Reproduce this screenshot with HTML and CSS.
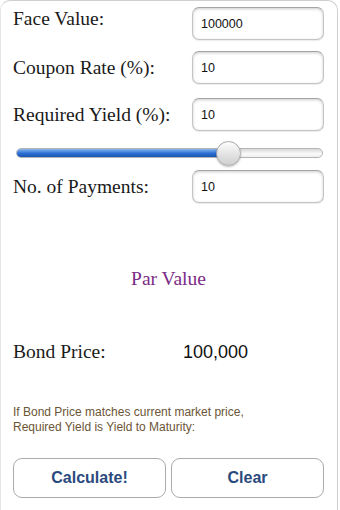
FILE: index.html
```html
<!DOCTYPE html>
<html lang="en">
<head>
  <meta charset="UTF-8">
  <meta name="viewport" content="width=device-width, initial-scale=1.0">
  <title>Bond Price</title>
  <link rel="stylesheet" href="styles.css">
</head>
<body>
  <div class="panel">
    <div class="row row-face">
      <label class="label">Face Value:</label>
      <input class="field" type="text" value="100000">
    </div>
    <div class="row row-coupon">
      <label class="label">Coupon Rate (%):</label>
      <input class="field" type="text" value="10">
    </div>
    <div class="row row-yield">
      <label class="label">Required Yield (%):</label>
      <input class="field" type="text" value="10">
    </div>

    <div class="slider">
      <div class="track">
        <div class="fill" style="width: 69%"></div>
      </div>
      <div class="thumb" style="left: 69%"></div>
    </div>

    <div class="row row-payments">
      <label class="label">No. of Payments:</label>
      <input class="field" type="text" value="10">
    </div>

    <div class="result-type">Par Value</div>

    <div class="price">
      <span class="label price-label">Bond Price:</span>
      <span class="price-value">100,000</span>
    </div>

    <p class="note">If Bond Price matches current market price,<br>Required Yield is Yield to Maturity:</p>

    <div class="btn-container">
      <button class="btn">Calculate!</button>
      <button class="btn">Clear</button>
    </div>
  </div>
</body>
</html>
```

FILE: styles.css
```css
body {
  margin: 0;
  padding: 0;
  background-color: #fff;
  font-family: "Liberation Sans", Arial, sans-serif;
}

/* main panel */
.panel {
  box-sizing: border-box;
  width: 338px;
  height: 510px;
  padding: 6px 13px 0 12px;
  background-color: #fff;
  border: 1px solid #cfcfcf;
  border-bottom: none;
  border-left-color: #e6e6e6;
  border-radius: 10px 10px 0 0;
}

/* label + input rows */
.row {
  display: flex;
  align-items: center;
  height: 33px;
}

.row-coupon {
  margin-top: 11px;
}

.row-yield {
  margin-top: 14px;
}

.row-payments {
  margin-top: 5px;
}

.row-face .label {
  margin-bottom: 9px;
}

.label {
  width: 179px;
  font-family: "Liberation Serif", "Times New Roman", serif;
  font-size: 19.5px;
  color: #1a1a1a;
}

.field {
  box-sizing: border-box;
  width: 132px;
  height: 33px;
  margin: 0;
  padding: 0 8px;
  font-family: "Liberation Sans", Arial, sans-serif;
  font-size: 12.5px;
  color: #111;
  background-color: #fff;
  border: 1px solid #c4c4c4;
  border-top-color: #a4a4a4;
  border-radius: 7px;
  box-shadow: inset 0 1px 3px rgba(0, 0, 0, 0.2), 0 1px 1px rgba(0, 0, 0, 0.08);
}

/* yield slider */
.slider {
  position: relative;
  height: 24px;
  margin: 10px 1px 0 3px;
  display: flex;
  align-items: center;
}

.track {
  box-sizing: border-box;
  width: 100%;
  height: 10px;
  border: 1px solid #b5b5b5;
  border-radius: 5px;
  background: linear-gradient(#d8d8d8, #fafafa 60%, #eee);
  overflow: hidden;
}

.fill {
  height: 100%;
  background: linear-gradient(#8ab6ee, #2a6fd2 55%, #1c55b0);
}

.thumb {
  position: absolute;
  top: 0;
  box-sizing: border-box;
  width: 25px;
  height: 25px;
  margin-left: -12px;
  border: 1px solid #a9a9a9;
  border-radius: 50%;
  background: linear-gradient(#fdfdfd, #e2e2e2 55%, #d0d0d0);
  box-shadow: 0 1px 2px rgba(0, 0, 0, 0.25);
}

/* result */
.result-type {
  margin-top: 64px;
  text-align: center;
  font-family: "Liberation Serif", "Times New Roman", serif;
  font-size: 19.5px;
  line-height: 24px;
  color: #7b2c86;
}

.price {
  display: flex;
  align-items: center;
  margin-top: 49px;
  height: 24px;
}

.price-label {
  width: 170px;
}

.price-value {
  font-size: 18px;
  color: #111;
}

.note {
  margin: 41px 0 0 0;
  font-size: 12px;
  line-height: 15px;
  color: #6b5536;
}

/* buttons */
.btn-container {
  display: flex;
  gap: 5px;
  margin-top: 23px;
}

.btn {
  flex: 1;
  height: 40px;
  margin: 0;
  font-family: "Liberation Sans", Arial, sans-serif;
  font-size: 16px;
  font-weight: bold;
  color: #2b4a7e;
  background: #fff;
  border: 1px solid #ababab;
  border-radius: 9px;
  cursor: pointer;
}
```
